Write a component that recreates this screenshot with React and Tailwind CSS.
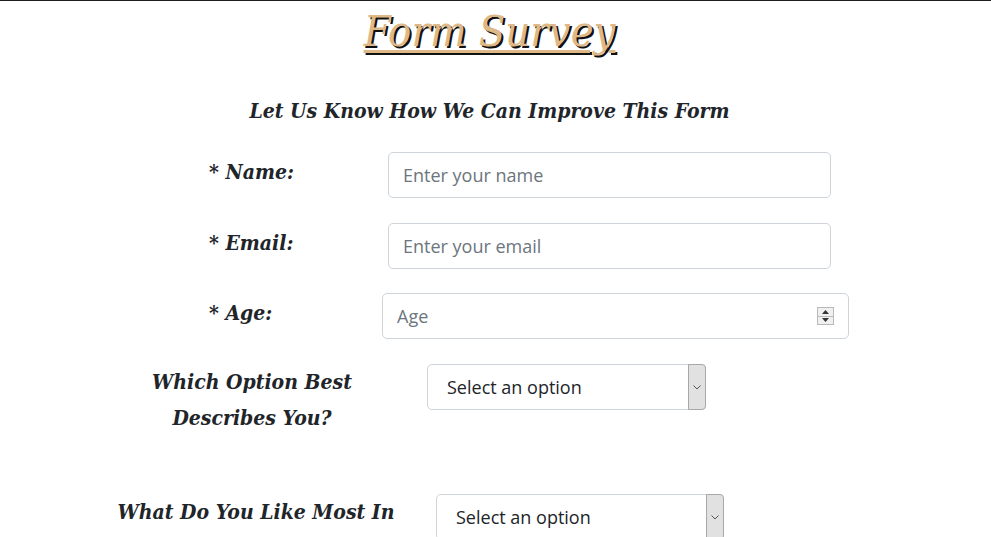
import React from 'react';

const serif = "font-['DejaVu_Serif_Condensed','DejaVu_Serif','Liberation_Serif',serif]";

const Spinner = () => (
  <span className="absolute right-[15px] top-[14px] flex h-[18px] w-[17px] flex-col border border-[#b9b9b9] bg-[#f0f0f0]">
    <span className="flex flex-1 items-center justify-center border-b border-[#b9b9b9]">
      <svg width="7" height="4" viewBox="0 0 7 4"><path d="M3.5 0L7 4H0z" fill="#333" /></svg>
    </span>
    <span className="flex flex-1 items-center justify-center">
      <svg width="7" height="4" viewBox="0 0 7 4"><path d="M0 0h7L3.5 4z" fill="#333" /></svg>
    </span>
  </span>
);

const SelectBox = ({ width }) => (
  <div className={`relative h-[46px] ${width}`}>
    <select
      defaultValue=""
      className="h-full w-full appearance-none rounded-[5px] border border-[#ced4da] bg-white pl-[19px] text-[18px] text-[#212529] font-['Open_Sans','Noto_Sans',sans-serif] outline-none"
    >
      <option value="" disabled>Select an option</option>
      <option>Student</option>
      <option>Full-time job</option>
      <option>Other</option>
    </select>
    <span className="pointer-events-none absolute right-0 top-0 flex h-full w-[18px] items-center justify-center rounded-r-[4px] border border-[#a8a8a8] bg-[#e1e1e1]">
      <svg width="8" height="5" viewBox="0 0 8 5"><path d="M0.5 0.5L4 4L7.5 0.5" fill="none" stroke="#555" strokeWidth="1" /></svg>
    </span>
  </div>
);

const inputCls =
  "h-[46px] rounded-[5px] border border-[#ced4da] bg-white pl-[14px] text-[18px] text-[#212529] placeholder:text-[#6c757d] font-['Open_Sans','Noto_Sans',sans-serif] outline-none";

const labelCls = `${serif} text-[21px] font-bold italic text-[#212529]`;

export default function App() {
  return (
    <div className="min-h-screen border-t border-[#1c1c21] bg-white">
      <h1 className={`${serif} mt-[2px] pr-[12px] text-center text-[43px] leading-[56px] italic text-[#deb887] underline decoration-[3px] underline-offset-[4px] [text-shadow:2px_2px_0_#111]`}>
        Form Survey
      </h1>

      <h2 className={`${labelCls} mt-[37px] text-center leading-[30px] pr-[12px]`}>
        Let Us Know How We Can Improve This Form
      </h2>

      <form className="mt-[26px]">
        <div className="ml-[209px] mb-[25px] flex items-start">
          <label className={`${labelCls} w-[179px] leading-[40px]`}>* Name:</label>
          <input type="text" placeholder="Enter your name" className={`${inputCls} w-[443px]`} />
        </div>

        <div className="ml-[209px] mb-[24px] flex items-start">
          <label className={`${labelCls} w-[179px] leading-[40px]`}>* Email:</label>
          <input type="email" placeholder="Enter your email" className={`${inputCls} w-[443px]`} />
        </div>

        <div className="ml-[209px] mb-[25px] flex items-start">
          <label className={`${labelCls} w-[173px] leading-[40px]`}>* Age:</label>
          <div className="relative">
            <input type="text" placeholder="Age" className={`${inputCls} w-[467px]`} />
            <Spinner />
          </div>
        </div>

        <div className="ml-[143px] mb-[58px] flex items-start">
          <label className={`${labelCls} w-[218px] text-center leading-[36px]`}>
            Which Option Best Describes You?
          </label>
          <div className="ml-[66px]">
            <SelectBox width="w-[279px]" />
          </div>
        </div>

        <div className="ml-[111px] flex items-start">
          <label className={`${labelCls} w-[290px] text-center leading-[36px]`}>
            What Do You Like Most In This Form?
          </label>
          <div className="ml-[35px]">
            <SelectBox width="w-[288px]" />
          </div>
        </div>
      </form>
    </div>
  );
}
